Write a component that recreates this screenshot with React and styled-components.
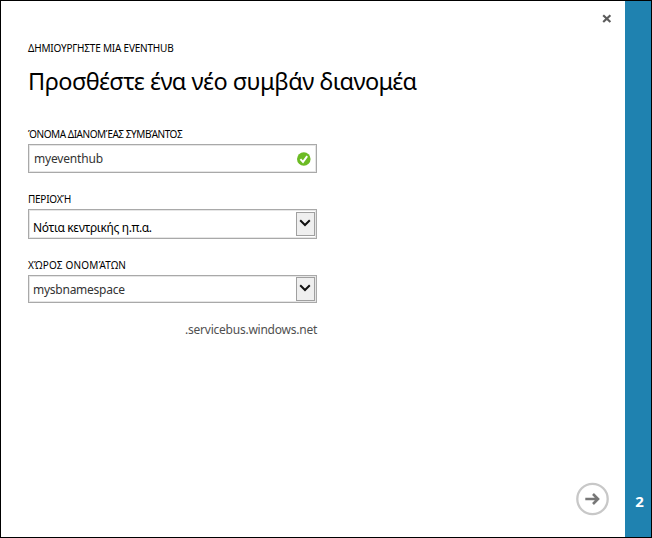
import React from "react";
import styled, { createGlobalStyle } from "styled-components";

const GlobalStyle = createGlobalStyle`
  * { box-sizing: border-box; }
  body { margin: 0; background: #fff; font-family: "Noto Sans", "Open Sans", sans-serif; color: #000; }
`;

const Dialog = styled.div`
  display: flex;
  width: 652px;
  height: 538px;
  border: 1px solid #000;
  background: #fff;
  overflow: hidden;
`;

const Main = styled.main`
  display: flex;
  flex-direction: column;
  width: 624px;
  padding: 0 0 0 27px;
`;

const TopBar = styled.div`
  display: flex;
  justify-content: flex-end;
  height: 35px;
  padding: 13px 13px 0 0;
`;

const IconButton = styled.button`
  display: block;
  padding: 0;
  border: 0;
  background: none;
  height: ${(p) => p.$size}px;
  width: ${(p) => p.$size}px;
  svg { display: block; }
`;

const Text = styled.span`
  display: inline-block;
  white-space: pre;
  font-size: ${(p) => p.$size}px;
  letter-spacing: ${(p) => p.$spacing || 0}px;
`;

const Eyebrow = styled.div`
  height: 20px;
  line-height: 20px;
`;

const Title = styled.h1`
  margin: 6px 0 0;
  height: 32px;
  line-height: 32px;
  font-weight: 400;
`;

const Form = styled.form`
  width: 289px;
  margin-top: 30px;
`;

const Field = styled.div`
  height: ${(p) => p.$height}px;
`;

const Label = styled.label`
  display: block;
  height: 20px;
  line-height: 16px;
`;

const Control = styled.div`
  display: flex;
  align-items: center;
  justify-content: space-between;
  height: ${(p) => p.$height || 30}px;
  padding: 0 ${(p) => p.$right}px 0 ${(p) => p.$left}px;
  border: 1px solid #a9a9a9;
  box-shadow: inset 0 0 0 1px #e6e6e6;
  line-height: 20px;
  color: ${(p) => p.$color || "#333"};
`;

const Value = styled.div`
  padding-top: ${(p) => p.$drop || 0}px;
  padding-bottom: ${(p) => (p.$drop ? 0 : 1)}px;
`;

const DropButton = styled.div`
  display: flex;
  align-items: center;
  justify-content: center;
  width: 19px;
  height: 24px;
  padding: 0 2px 2px 0;
  border: 1px solid #a0a0a0;
  background: #efefef;
`;

const Suffix = styled.div`
  height: 20px;
  line-height: 20px;
  text-align: right;
  color: #505050;
`;

const Footer = styled.div`
  display: flex;
  justify-content: flex-end;
  margin-top: auto;
  padding: 0 15px 21px 0;
`;

const StepRail = styled.aside`
  display: flex;
  align-items: flex-end;
  justify-content: center;
  width: 26px;
  padding: 0 0 26px 3px;
  background: #1f82b0;
  color: #fff;
  font-size: 15px;
  font-weight: 700;
  line-height: 20px;
`;

const Check = () => (
  <svg width="14" height="14" viewBox="0 0 14 14">
    <circle cx="6.8" cy="7" r="6.8" fill="#6cbb24" />
    <path d="M3.4 7.1 6 9.9 10.2 4.1" fill="none" stroke="#fff" strokeWidth="1.9" />
  </svg>
);

const Chevron = () => (
  <svg width="12" height="8" viewBox="0 0 12 8">
    <path d="M1.2 1.3 6 6 10.8 1.3" fill="none" stroke="#111" strokeWidth="2" />
  </svg>
);

function Select({ value, size, spacing, drop, color, height }) {
  return (
    <Control $left={4} $right={1} $color={color} $height={height}>
      <Value $drop={drop}><Text $size={size} $spacing={spacing}>{value}</Text></Value>
      <DropButton><Chevron /></DropButton>
    </Control>
  );
}

export default function App() {
  return (
    <>
      <GlobalStyle />
      <Dialog>
        <Main>
          <TopBar>
            <IconButton $size={10} aria-label="Close">
              <svg width="10" height="10" viewBox="0 0 10 10">
                <path d="M1.2 1.2 8.4 8M8.4 1.2 1.2 8" stroke="#5c5c5c" strokeWidth="2.2" />
              </svg>
            </IconButton>
          </TopBar>
          <Eyebrow><Text $size={10} $spacing={-0.2}>ΔΗΜΙΟΥΡΓΗΣΤΕ ΜΙΑ EVENTHUB</Text></Eyebrow>
          <Title><Text $size={23.5} $spacing={-0.52}>Προσθέστε ένα νέο συμβάν διανομέα</Text></Title>
          <Form>
            <Field $height={65}>
              <Label><Text $size={10} $spacing={-0.45}>ΌΝΟΜΑ ΔΙΑΝΟΜΈΑΣ ΣΥΜΒΆΝΤΟΣ</Text></Label>
              <Control $left={5} $right={5} $height={29}>
                <Value><Text $size={12} $spacing={-0.18}>myeventhub</Text></Value>
                <Check />
              </Control>
            </Field>
            <Field $height={66}>
              <Label><Text $size={10} $spacing={-0.25}>ΠΕΡΙΟΧΉ</Text></Label>
              <Select value="Νότια κεντρικής η.π.α." size={12} spacing={-0.36} drop={6} color="#000" />
            </Field>
            <Field $height={63}>
              <Label><Text $size={10} $spacing={0.2}>ΧΏΡΟΣ ΟΝΟΜΆΤΩΝ</Text></Label>
              <Select value="mysbnamespace" size={12} spacing={-0.25} height={28} />
            </Field>
            <Suffix><Text $size={12} $spacing={-0.24}>.servicebus.windows.net</Text></Suffix>
          </Form>
          <Footer>
            <IconButton $size={34} aria-label="Next">
              <svg width="34" height="34" viewBox="0 0 34 34">
                <circle cx="16.5" cy="17" r="15.2" fill="#fff" stroke="#c8c8c8" strokeWidth="2.3" />
                <path d="M9.3 17H21.5M17 12 22 17 17 22" fill="none" stroke="#777" strokeWidth="2.6" />
              </svg>
            </IconButton>
          </Footer>
        </Main>
        <StepRail>2</StepRail>
      </Dialog>
    </>
  );
}
